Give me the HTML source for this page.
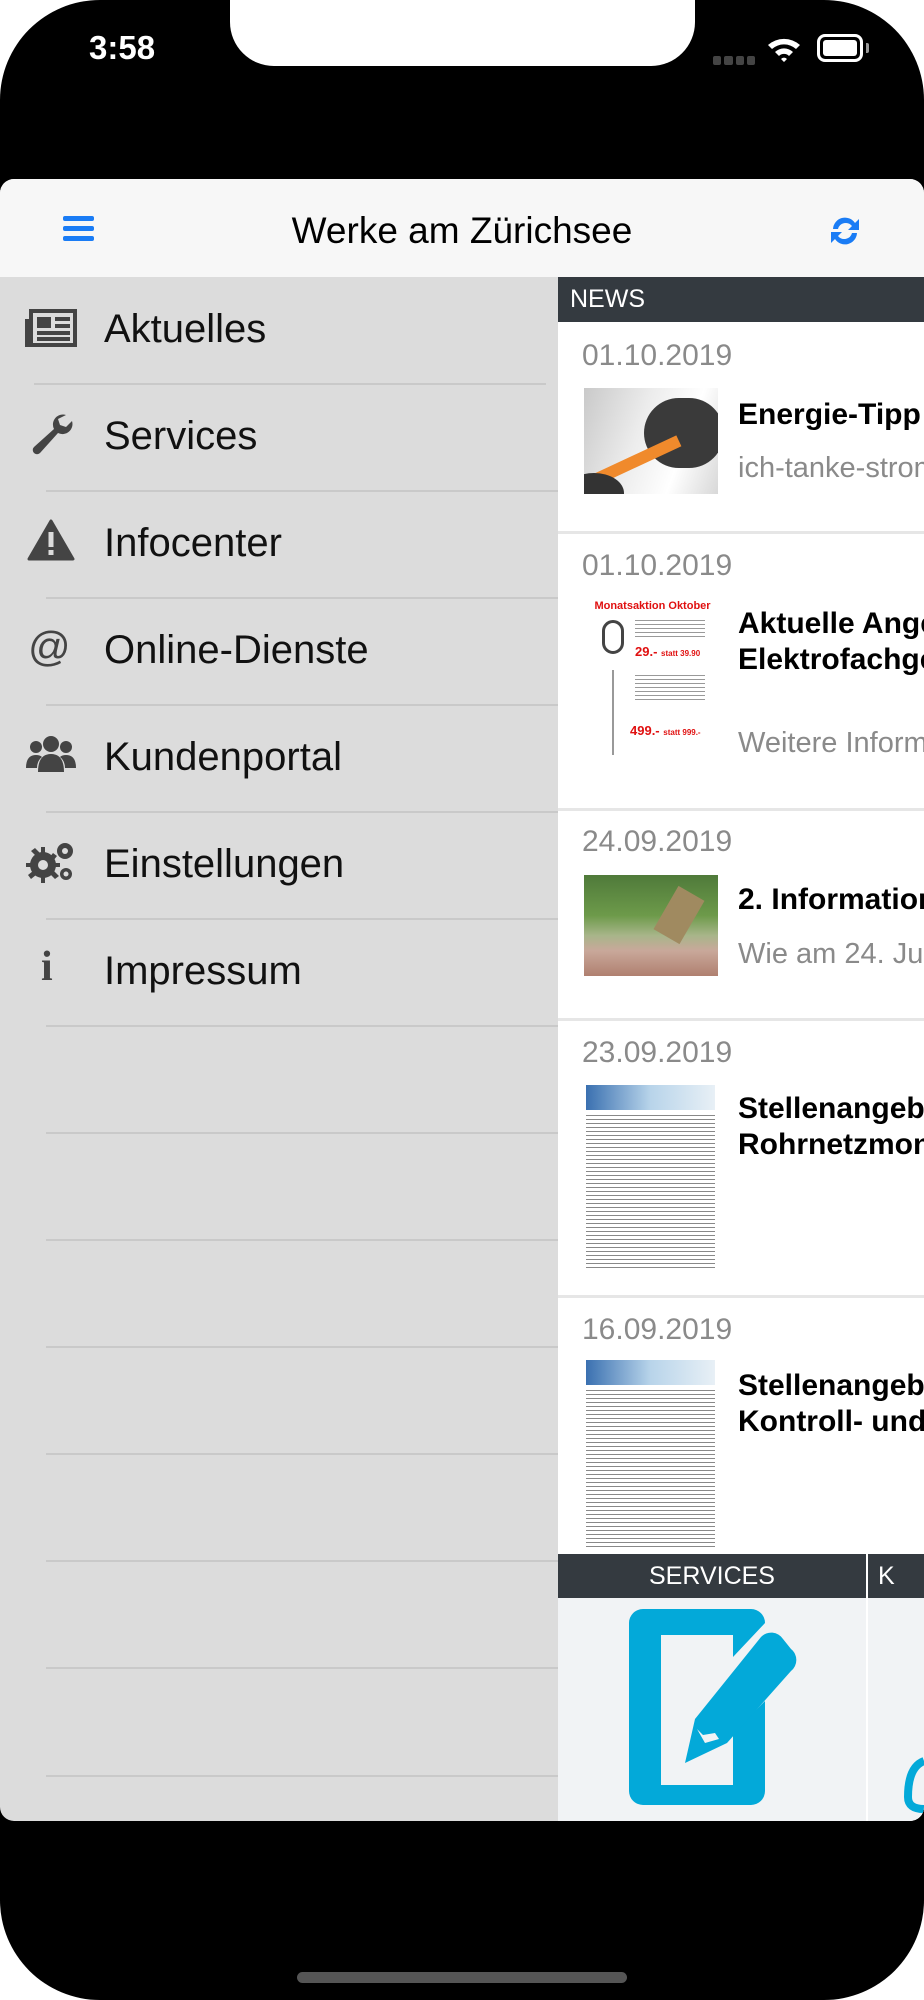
<!DOCTYPE html>
<html><head><meta charset="utf-8"><style>
*{margin:0;padding:0;box-sizing:border-box}
body{width:924px;height:2000px;background:#fff;position:relative;overflow:hidden;font-family:"Liberation Sans",sans-serif}
.abs{position:absolute}
#phone{left:0;top:0;width:924px;height:2000px;background:#000;border-radius:100px}
#notch{left:230px;top:-2px;width:465px;height:68px;background:#fff;border-radius:0 0 44px 44px}
#card{left:0;top:179px;width:924px;height:1642px;background:#dcdcdc;border-radius:14px;overflow:hidden}
#nav{left:0;top:0;width:924px;height:98px;background:#f7f7f7}
#title{left:0;top:31px;width:924px;text-align:center;font-size:37px;color:#000}
.mi{left:104px;font-size:40px;color:#111}
.sep{height:2px;background:#c9c9c9;left:46px;width:512px}
#news{left:558px;top:98px;width:366px;height:1544px;background:#fff}
.hdr{background:#343a40;color:#fff}
.date{left:24px;font-size:30px;color:#8a8a8a}
.tt{left:180px;font-size:30px;font-weight:bold;color:#000;white-space:nowrap;line-height:36px}
.sub{left:180px;font-size:29px;color:#8a8a8a;white-space:nowrap}
.hs{left:0;width:366px;height:3px;background:#e6e6e6}
</style></head><body>
<div id="phone" class="abs"></div>
<div id="notch" class="abs"></div>
<div class="abs" style="left:89px;top:29px;color:#fff;font-size:33px;font-weight:bold">3:58</div>
<div class="abs" style="left:713px;top:56px;width:42px;height:9px;display:flex;gap:3px"><i style="flex:1;background:#444;border-radius:2px"></i><i style="flex:1;background:#444;border-radius:2px"></i><i style="flex:1;background:#444;border-radius:2px"></i><i style="flex:1;background:#444;border-radius:2px"></i></div>
<svg class="abs" style="left:766px;top:34px" width="36" height="30" viewBox="0 0 36 30"><path d="M2 11 A24 24 0 0 1 34 11 L30 15 A18 18 0 0 0 6 15Z M9 18 A13 13 0 0 1 27 18 L23 22 A7 7 0 0 0 13 22Z M15 25 L18 28 L21 25 A4 4 0 0 0 15 25Z" fill="#fff"/></svg>
<div class="abs" style="left:817px;top:34px;width:46px;height:28px;border:3px solid #fff;border-radius:8px;padding:3px"><div style="width:100%;height:100%;background:#fff;border-radius:3px"></div></div>
<div class="abs" style="left:866px;top:43px;width:3px;height:10px;background:#fff;border-radius:0 2px 2px 0;opacity:.6"></div>

<div id="card" class="abs">
 <div id="nav" class="abs">
  <div class="abs" style="left:63px;top:37px;width:31px;height:5px;background:#1a7cf5;border-radius:2px"></div>
  <div class="abs" style="left:63px;top:47px;width:31px;height:5px;background:#1a7cf5;border-radius:2px"></div>
  <div class="abs" style="left:63px;top:57px;width:31px;height:5px;background:#1a7cf5;border-radius:2px"></div>
  <div id="title" class="abs">Werke am Zürichsee</div>
  <svg class="abs" style="left:828px;top:35px" width="34" height="34" viewBox="0 0 34 34"><path d="M5 15 A12 12 0 0 1 27 9 L31 5 V16 H20 L24 12 A8 8 0 0 0 10 15Z M29 19 A12 12 0 0 1 7 25 L3 29 V18 H14 L10 22 A8 8 0 0 0 24 19Z" fill="#1a7cf5"/></svg>
 </div>
 <div class="mi abs" style="top:128px">Aktuelles</div>
 <div class="mi abs" style="top:235px">Services</div>
 <div class="mi abs" style="top:342px">Infocenter</div>
 <div class="mi abs" style="top:449px">Online-Dienste</div>
 <div class="mi abs" style="top:556px">Kundenportal</div>
 <div class="mi abs" style="top:663px">Einstellungen</div>
 <div class="mi abs" style="top:770px">Impressum</div>
 <div class="sep abs" style="top:204px;left:34px"></div>
 <div class="sep abs" style="top:311px"></div><div class="sep abs" style="top:418px"></div><div class="sep abs" style="top:525px"></div><div class="sep abs" style="top:632px"></div><div class="sep abs" style="top:739px"></div><div class="sep abs" style="top:846px"></div><div class="sep abs" style="top:953px"></div><div class="sep abs" style="top:1060px"></div><div class="sep abs" style="top:1167px"></div><div class="sep abs" style="top:1274px"></div><div class="sep abs" style="top:1381px"></div><div class="sep abs" style="top:1488px"></div><div class="sep abs" style="top:1596px"></div>
 <svg class="abs" style="left:25px;top:130px" width="52" height="40" viewBox="0 0 52 40"><rect x="6" y="2" width="44" height="34" fill="none" stroke="#444" stroke-width="4"/><path d="M2 10 V36 H8" fill="none" stroke="#444" stroke-width="4"/><rect x="12" y="8" width="14" height="11" fill="#444"/><path d="M30 10H45M30 17H45M12 24H45M12 30H45" stroke="#444" stroke-width="4"/></svg>
 <svg class="abs" style="left:30px;top:232px" width="44" height="44" viewBox="0 0 44 44"><path d="M36 4 A10 10 0 0 0 24 18 L4 36 A4 4 0 0 0 10 42 L28 22 A10 10 0 0 0 42 10 L36 16 L30 14 L28 8Z" fill="#444"/></svg>
 <svg class="abs" style="left:27px;top:340px" width="48" height="42" viewBox="0 0 48 42"><path d="M24 2 L46 40 H2Z" fill="#444" stroke="#444" stroke-width="3" stroke-linejoin="round"/><rect x="21.5" y="13" width="5" height="15" fill="#dcdcdc"/><rect x="21.5" y="31" width="5" height="5" fill="#dcdcdc"/></svg>
 <div class="abs" style="left:28px;top:444px;font-size:42px;color:#444">@</div>
 <svg class="abs" style="left:26px;top:555px" width="50" height="40" viewBox="0 0 50 40"><circle cx="25" cy="10" r="8" fill="#444"/><circle cx="10" cy="13" r="6" fill="#444"/><circle cx="40" cy="13" r="6" fill="#444"/><path d="M12 38 Q12 20 25 20 Q38 20 38 38Z M0 34 Q0 21 10 21 Q14 21 16 23 Q11 27 11 34Z M50 34 Q50 21 40 21 Q36 21 34 23 Q39 27 39 34Z" fill="#444"/></svg>
 <svg class="abs" style="left:26px;top:660px" width="50" height="46" viewBox="0 0 50 46"><g fill="#444"><circle cx="17" cy="26" r="13"/><path d="M15 8h4v6h-4zM15 38h4v6h-4zM0 24h6v4H0zM28 24h6v4h-6z" /><path d="M5 12l4-3 5 5-4 3zM24 35l4-3 5 5-4 3zM5 40l-3-4 5-4 3 4zM27 14l4 3-4 5-4-3z"/><circle cx="39" cy="12" r="8"/><circle cx="40" cy="35" r="6"/></g><circle cx="17" cy="26" r="5" fill="#dcdcdc"/><circle cx="39" cy="12" r="3" fill="#dcdcdc"/><circle cx="40" cy="35" r="2.5" fill="#dcdcdc"/></svg>
 <div class="abs" style="left:41px;top:764px;font-size:42px;font-weight:bold;font-family:'Liberation Serif',serif;color:#444">i</div>

 <div id="news" class="abs">
  <div class="hdr abs" style="left:0;top:0;width:366px;height:45px"><span class="abs" style="left:12px;top:8px;font-size:25px">NEWS</span></div>
  <div class="date abs" style="top:62px">01.10.2019</div>
  <div class="abs" style="left:26px;top:111px;width:134px;height:106px;background:linear-gradient(110deg,#c9c9c9 0%,#ececec 40%,#fff 70%,#d8d8d8 100%);overflow:hidden">
   <div class="abs" style="left:60px;top:10px;width:80px;height:70px;border-radius:40px;background:#3a3a3a"></div>
   <div class="abs" style="left:-10px;top:70px;width:110px;height:12px;background:#f08a2c;transform:rotate(-25deg)"></div>
   <div class="abs" style="left:-20px;top:85px;width:60px;height:40px;background:#333;border-radius:50%"></div>
  </div>
  <div class="tt abs" style="top:120px">Energie-Tipp</div>
  <div class="sub abs" style="top:175px">ich-tanke-strom</div>
  <div class="hs abs" style="top:254px"></div>

  <div class="date abs" style="top:272px">01.10.2019</div>
  <div class="abs" style="left:32px;top:323px;width:125px;height:182px;background:#fff">
   <div style="color:#e01010;font-size:11px;font-weight:bold;text-align:center">Monatsaktion Oktober</div>
   <div class="abs" style="left:12px;top:20px;width:22px;height:34px;border:3px solid #444;border-radius:11px"></div>
   <div class="abs" style="left:45px;top:20px;width:70px;height:20px;background:repeating-linear-gradient(#999 0 1px,#fff 1px 4px)"></div>
   <div class="abs" style="left:45px;top:44px;color:#e01010;font-size:13px;font-weight:bold">29.- <span style="font-size:8px">statt 39.90</span></div>
   <div class="abs" style="left:22px;top:70px;width:2px;height:85px;background:#999"></div>
   <div class="abs" style="left:45px;top:75px;width:70px;height:25px;background:repeating-linear-gradient(#999 0 1px,#fff 1px 4px)"></div>
   <div class="abs" style="left:40px;top:123px;color:#e01010;font-size:13px;font-weight:bold">499.- <span style="font-size:8px">statt 999.-</span></div>
  </div>
  <div class="tt abs" style="top:329px">Aktuelle Angebote<br>Elektrofachgeschäft</div>
  <div class="sub abs" style="top:450px">Weitere Informationen</div>
  <div class="hs abs" style="top:531px"></div>

  <div class="date abs" style="top:548px">24.09.2019</div>
  <div class="abs" style="left:26px;top:598px;width:134px;height:101px;background:linear-gradient(180deg,#4f7a3a 0%,#6d9a4a 40%,#a8b58a 60%,#c9a89a 75%,#b08070 100%)"><div class="abs" style="left:80px;top:15px;width:30px;height:50px;background:#a08a60;transform:rotate(30deg)"></div></div>
  <div class="tt abs" style="top:605px">2. Information</div>
  <div class="sub abs" style="top:661px">Wie am 24. Juni</div>
  <div class="hs abs" style="top:741px"></div>

  <div class="date abs" style="top:759px">23.09.2019</div>
  <div class="abs" style="left:26px;top:808px;width:133px;height:191px;background:#fff">
   <div class="abs" style="left:2px;top:0;width:129px;height:25px;background:linear-gradient(90deg,#3a70b0,#b8d4ea 50%,#e8f0f6)"></div>
   <div class="abs" style="left:2px;top:30px;width:129px;height:155px;background:repeating-linear-gradient(#888 0 1px,#fff 1px 4px)"></div>
  </div>
  <div class="tt abs" style="top:814px">Stellenangebot<br>Rohrnetzmonteur</div>
  <div class="hs abs" style="top:1018px"></div>

  <div class="date abs" style="top:1036px">16.09.2019</div>
  <div class="abs" style="left:26px;top:1083px;width:133px;height:194px;background:#fff">
   <div class="abs" style="left:2px;top:0;width:129px;height:25px;background:linear-gradient(90deg,#3a70b0,#b8d4ea 50%,#e8f0f6)"></div>
   <div class="abs" style="left:2px;top:30px;width:129px;height:160px;background:repeating-linear-gradient(#888 0 1px,#fff 1px 4px)"></div>
  </div>
  <div class="tt abs" style="top:1091px">Stellenangebot<br>Kontroll- und</div>

  <div class="hdr abs" style="left:0;top:1277px;width:308px;height:44px;text-align:center;font-size:25px;line-height:44px">SERVICES</div>
  <div class="hdr abs" style="left:310px;top:1277px;width:56px;height:44px;font-size:25px;line-height:44px;padding-left:10px">K</div>
  <div class="abs" style="left:0;top:1321px;width:308px;height:223px;background:#f1f3f5"></div>
  <div class="abs" style="left:310px;top:1321px;width:56px;height:223px;background:#f1f3f5"></div>
  <svg class="abs" style="left:67px;top:1330px" width="180" height="200" viewBox="0 0 180 200"><path d="M18 2 H126 A14 14 0 0 1 140 16 L108 50 V28 H36 V178 H108 V126 L140 94 V184 A14 14 0 0 1 126 198 H18 A14 14 0 0 1 4 184 V16 A14 14 0 0 1 18 2Z" fill="#03a9d9"/><path d="M136 30 A14 14 0 0 1 158 32 L166 42 A14 14 0 0 1 166 64 L102 136 L60 156 L70 112Z" fill="#03a9d9"/><path d="M72 122 L80 136 L94 132 L90 126 L78 128Z" fill="#f1f3f5"/></svg>
  <svg class="abs" style="left:346px;top:1480px" width="20" height="60" viewBox="0 0 20 60"><path d="M20 4 Q4 10 4 40 Q4 52 20 52" fill="none" stroke="#03a9d9" stroke-width="8"/></svg>
 </div>
</div>
<div class="abs" style="left:297px;top:1972px;width:330px;height:11px;background:#555;border-radius:6px"></div>
</body></html>
